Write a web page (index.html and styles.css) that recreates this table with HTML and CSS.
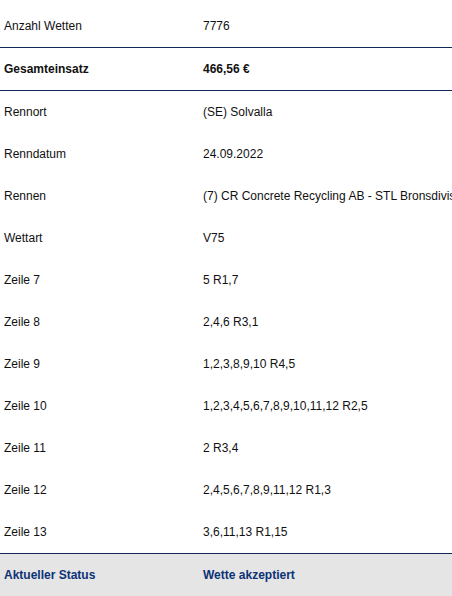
FILE: index.html
```html
<!DOCTYPE html>
<html lang="de">
<head>
<meta charset="utf-8">
<link rel="stylesheet" href="styles.css">
</head>
<body>
<div class="wrap">
<table class="bet">
<tbody>
<tr><td class="k">Anzahl Wetten</td><td class="v">7776</td></tr>
<tr class="sep bold"><td class="k">Gesamteinsatz</td><td class="v">466,56 €</td></tr>
<tr class="sep"><td class="k">Rennort</td><td class="v">(SE) Solvalla</td></tr>
<tr><td class="k">Renndatum</td><td class="v">24.09.2022</td></tr>
<tr><td class="k">Rennen</td><td class="v">(7) CR Concrete Recycling AB - STL Bronsdivisionen</td></tr>
<tr><td class="k">Wettart</td><td class="v">V75</td></tr>
<tr><td class="k">Zeile 7</td><td class="v">5 R1,7</td></tr>
<tr><td class="k">Zeile 8</td><td class="v">2,4,6 R3,1</td></tr>
<tr><td class="k">Zeile 9</td><td class="v">1,2,3,8,9,10 R4,5</td></tr>
<tr><td class="k">Zeile 10</td><td class="v">1,2,3,4,5,6,7,8,9,10,11,12 R2,5</td></tr>
<tr><td class="k">Zeile 11</td><td class="v">2 R3,4</td></tr>
<tr><td class="k">Zeile 12</td><td class="v">2,4,5,6,7,8,9,11,12 R1,3</td></tr>
<tr><td class="k">Zeile 13</td><td class="v">3,6,11,13 R1,15</td></tr>
<tr class="sep status"><td class="k">Aktueller Status</td><td class="v">Wette akzeptiert</td></tr>
</tbody>
</table>
</div>
</body>
</html>
```
FILE: styles.css
```css
html, body {
  margin: 0;
  padding: 0;
  overflow: hidden;
  background: #ffffff;
}
.wrap {
  padding-top: 5px;
  width: 452px;
  overflow: hidden;
}
.bet {
  border-collapse: separate;
  border-spacing: 0;
  font-family: "Liberation Sans", Arial, sans-serif;
  font-size: 12px;
  color: #111111;
  width: 600px;
}
.bet td {
  height: 42px;
  padding: 0 0 0 4px;
  vertical-align: middle;
  white-space: nowrap;
  box-sizing: border-box;
}
.bet td.k {
  width: 199px;
}
.bet tr.sep td {
  border-top: 1px solid #10295a;
  height: 43px;
}
.bet tr.bold td {
  font-weight: bold;
}
.bet tr.status td {
  background: #e5e5e5;
  color: #0d3275;
  font-weight: bold;
}
```
